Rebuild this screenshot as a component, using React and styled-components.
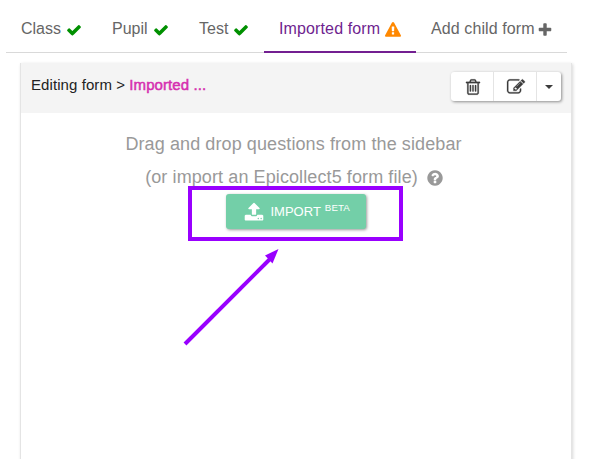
import React from "react";
import styled, { createGlobalStyle } from "styled-components";

const Global = createGlobalStyle`
  * { box-sizing: border-box; }
  body { margin: 0; background: #fff; overflow: hidden; font-family: "Liberation Sans", Arial, sans-serif; }
`;

const PATHS = {
  check: "M1671 566q0 40-28 68l-724 724-136 136q-28 28-68 28t-68-28l-136-136-362-362q-28-28-28-68t28-68l136-136q28-28 68-28t68 28l294 295 656-657q28-28 68-28t68 28l136 136q28 28 28 68z",
  plus: "M1600 736v192q0 40-28 68t-68 28h-416v416q0 40-28 68t-68 28h-192q-40 0-68-28t-28-68v-416h-416q-40 0-68-28t-28-68v-192q0-40 28-68t68-28h416v-416q0-40 28-68t68-28h192q40 0 68 28t28 68v416h416q40 0 68 28t28 68z",
  warning: "M1024 1375v-190q0-14-9.5-23.5t-22.5-9.5h-192q-13 0-22.5 9.5t-9.5 23.5v190q0 14 9.5 23.5t22.5 9.5h192q13 0 22.5-9.5t9.5-23.5zm-2-374l18-459q0-12-10-19-13-11-24-11h-220q-11 0-24 11-10 7-10 21l17 457q0 10 10 16.5t24 6.5h185q14 0 23.5-6.5t10.5-16.5zm-14-934l768 1408q35 63-2 126-17 29-46.5 46t-63.5 17h-1536q-34 0-63.5-17t-46.5-46q-37-63-2-126l768-1408q17-31 47-49t65-18 65 18 47 49z",
  trash: "M704 736v576q0 14-9 23t-23 9h-64q-14 0-23-9t-9-23v-576q0-14 9-23t23-9h64q14 0 23 9t9 23zm256 0v576q0 14-9 23t-23 9h-64q-14 0-23-9t-9-23v-576q0-14 9-23t23-9h64q14 0 23 9t9 23zm256 0v576q0 14-9 23t-23 9h-64q-14 0-23-9t-9-23v-576q0-14 9-23t23-9h64q14 0 23 9t9 23zm128 724v-948h-896v948q0 22 7 40.5t14.5 27 10.5 8.5h832q3 0 10.5-8.5t14.5-27 7-40.5zm-672-1076h448l-48-117q-7-9-17-11h-317q-10 2-17 11zm928 32v64q0 14-9 23t-23 9h-96v948q0 83-47 143.5t-113 60.5h-832q-66 0-113-58.5t-47-141.5v-952h-96q-14 0-23-9t-9-23v-64q0-14 9-23t23-9h309l70-167q15-37 54-63t79-26h320q40 0 79 26t54 63l70 167h309q14 0 23 9t9 23z",
  edit: "M888 1184l116-116-152-152-116 116v56h96v96h56zm440-720q-16-16-33 1l-350 350q-17 17-1 33t33-1l350-350q17-17 1-33zm80 594v190q0 119-84.5 203.5t-203.5 84.5h-832q-119 0-203.5-84.5t-84.5-203.5v-832q0-119 84.5-203.5t203.5-84.5h832q63 0 117 25 15 7 18 23 3 17-9 29l-49 49q-14 14-32 8-23-6-45-6h-832q-66 0-113 47t-47 113v832q0 66 47 113t113 47h832q66 0 113-47t47-113v-126q0-13 9-22l64-64q15-15 35-7t20 29zm-96-738l288 288-672 672h-288v-288zm444 132l-92 92-288-288 92-92q28-28 68-28t68 28l152 152q28 28 28 68t-28 68z",
  help: "M1024 1376v-192q0-14-9-23t-23-9h-192q-14 0-23 9t-9 23v192q0 14 9 23t23 9h192q14 0 23-9t9-23zm256-672q0-88-55.5-163t-138.5-116-170-41q-243 0-371 213-15 24 8 42l132 100q7 6 19 6 16 0 25-12 53-68 86-92 34-24 86-24 48 0 85.5 26t37.5 59q0 38-20 61t-68 45q-63 28-115.5 86.5t-52.5 125.5v36q0 14 9 23t23 9h192q14 0 23-9t9-23q0-19 21.5-49.5t54.5-49.5q32-18 49-28.5t46-35 44.5-48 28-60.5 12.5-81zm384 192q0 209-103 385.5t-279.5 279.5-385.5 103-385.5-103-279.5-279.5-103-385.5 103-385.5 279.5-279.5 385.5-103 385.5 103 279.5 279.5 103 385.5z",
  upload: "M1344 1472q0-26-19-45t-45-19-45 19-19 45 19 45 45 19 45-19 19-45zm256 0q0-26-19-45t-45-19-45 19-19 45 19 45 45 19 45-19 19-45zm128-224v320q0 40-28 68t-68 28h-1472q-40 0-68-28t-28-68v-320q0-40 28-68t68-28h427q21 56 70.5 92t110.5 36h256q61 0 110.5-36t70.5-92h427q40 0 68 28t28 68zm-325-648q-17 40-59 40h-256v448q0 26-19 45t-45 19h-256q-26 0-45-19t-19-45v-448h-256q-42 0-59-40-17-39 14-69l448-448q18-19 45-19t45 19l448 448q31 30 14 69z",
};

const Glyph = styled.svg`
  display: block;
  flex: none;
  width: ${(p) => p.$size}px;
  height: ${(p) => p.$size}px;
  margin: ${(p) => p.$margin || "0"};
  fill: ${(p) => p.$color || "currentColor"};
  stroke: currentColor;
  stroke-width: ${(p) => p.$weight || 0};
  overflow: visible;
`;
const Icon = ({ name, size = 16, color, margin, weight }) => (
  <Glyph viewBox="0 0 1792 1792" $size={size} $color={color} $margin={margin} $weight={weight} aria-hidden="true">
    <path d={PATHS[name]} />
  </Glyph>
);

const Page = styled.div`
  width: 590px;
  height: 459px;
  overflow: hidden;
  position: relative;
`;

const Tabs = styled.nav`
  display: flex;
  width: 561px;
  height: 53px;
  margin-left: 6px;
  border-bottom: 1px solid #d9d9d9;
`;

const Tab = styled.a`
  display: flex;
  align-items: flex-start;
  flex: none;
  width: ${(p) => p.$width}px;
  height: 53px;
  padding: 20px 0 0 15px;
  font-size: 16px;
  line-height: 18px;
  letter-spacing: ${(p) => p.$spacing || 0}px;
  white-space: nowrap;
  color: ${(p) => (p.$active ? "#6f1f8f" : "#666")};
  border-bottom: ${(p) => (p.$active ? "2px solid #731f91" : "none")};
`;

const Panel = styled.section`
  width: 552px;
  height: 420px;
  margin: 10px 0 0 20px;
  border: 1px solid #e4e4e4;
  border-top: none;
  box-shadow: 1px 1px 3px rgba(0, 0, 0, 0.16);
`;

const PanelHeader = styled.header`
  display: flex;
  justify-content: space-between;
  height: 50px;
  padding: 9px 10px 0 10px;
  background: #f4f4f4;
`;

const Title = styled.h1`
  margin: 0;
  padding-top: 4px;
  font-size: 15px;
  font-weight: 400;
  line-height: 18px;
  letter-spacing: 0.08px;
  color: #222;
`;

const FormName = styled.span`
  color: #d62fb0;
  -webkit-text-stroke: 0.5px #d62fb0;
`;

const ButtonGroup = styled.div`
  display: flex;
  width: 110px;
  height: 29px;
  background: #fff;
  border-radius: 3px;
  box-shadow: 1px 1px 3px rgba(0, 0, 0, 0.42);
`;

const ToolButton = styled.button`
  display: flex;
  align-items: center;
  justify-content: center;
  width: ${(p) => p.$width}px;
  padding: 0;
  border: 0;
  border-right: ${(p) => (p.$last ? "0" : "1px solid #e4e4e4")};
  background: transparent;
  color: #3c3c3c;
`;

const Caret = styled.span`
  border: 4px solid transparent;
  border-top-color: #3c3c3c;
  border-bottom: 0;
`;

const DropZone = styled.div`
  display: flex;
  flex-direction: column;
  align-items: center;
  padding-top: 15px;
  color: #999;
`;

const Hint = styled.p`
  display: flex;
  align-items: center;
  height: 33px;
  margin: 0;
  padding-right: ${(p) => p.$inset}px;
  font-size: 18px;
  letter-spacing: 0.1px;
  white-space: nowrap;
`;

const ImportButton = styled.button`
  display: flex;
  align-items: center;
  width: 140px;
  height: 35px;
  margin-right: 1px;
  padding: 0 0 0 18px;
  border: 0;
  border-radius: 3px;
  background: #73cfa8;
  color: #fff;
  font: 13px/18px "Liberation Sans", Arial, sans-serif;
  box-shadow: 1px 1px 3px rgba(0, 0, 0, 0.4);
`;

const Beta = styled.sup`
  font-size: 9.75px;
  line-height: 10px;
  letter-spacing: 0.1px;
  margin: -8px 0 0 4px;
`;

const Highlight = styled.div`
  position: absolute;
  left: 188px;
  top: 186px;
  width: 215px;
  height: 55px;
  border: 4px solid #9900ff;
`;

const Arrow = styled.svg`
  position: absolute;
  left: 180px;
  top: 244px;
  width: 104px;
  height: 106px;
`;

export default function App() {
  return (
    <Page>
      <Global />
      <Tabs>
        <Tab $width={91}>Class<Icon name="check" color="#009000" margin="2px 0 0 5px" /></Tab>
        <Tab $width={87}>Pupil<Icon name="check" color="#009000" margin="2px 0 0 5px" /></Tab>
        <Tab $width={80}>Test<Icon name="check" color="#009000" margin="2px 0 0 5px" /></Tab>
        <Tab $width={152} $active $spacing={0.13}>Imported form<Icon name="warning" color="#ff8800" margin="2px 0 0 4.5px" /></Tab>
        <Tab $width={151} $spacing={0.1}>Add child form<Icon name="plus" margin="2px 0 0 2.5px" /></Tab>
      </Tabs>
      <Panel>
        <PanelHeader>
          <Title>Editing form &gt; <FormName>Imported ...</FormName></Title>
          <ButtonGroup>
            <ToolButton $width={43} aria-label="Delete"><Icon name="trash" size={18} margin="0 0 0 1px" weight={25} /></ToolButton>
            <ToolButton $width={43} aria-label="Edit"><Icon name="edit" size={18} margin="0 0 0 1px" weight={25} /></ToolButton>
            <ToolButton $width={24} $last aria-label="More"><Caret /></ToolButton>
          </ButtonGroup>
        </PanelHeader>
        <DropZone>
          <Hint $inset={5}>Drag and drop questions from the sidebar</Hint>
          <Hint $inset={3}>(or import an Epicollect5 form file)<Icon name="help" size={18} margin="0 0 0 8px" /></Hint>
          <ImportButton>
            <Icon name="upload" size={20} margin="0 7px 0 0" />IMPORT<Beta>BETA</Beta>
          </ImportButton>
        </DropZone>
      </Panel>
      <Highlight />
      <Arrow viewBox="180 244 104 106">
        <path d="M185 344L271 258" stroke="#9900ff" strokeWidth="4" />
        <path d="M278.5 249L265 255.5L272.5 263.5Z" fill="#9900ff" />
      </Arrow>
    </Page>
  );
}
